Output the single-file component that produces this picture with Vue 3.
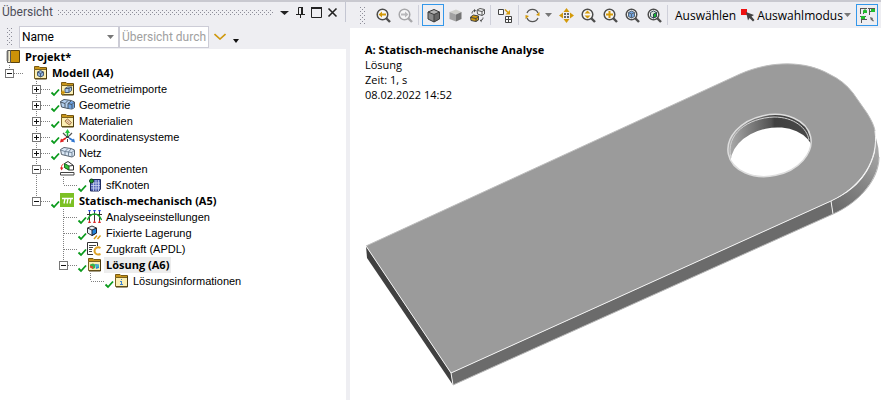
<template>
  <!-- Icônes partagées par l'arbre et la barre d'outils -->
  <svg class="sprite" aria-hidden="true">
    <defs>
      <pattern id="dots" width="4" height="4" patternUnits="userSpaceOnUse">
        <rect width="1" height="1" fill="#8d8d99" />
        <rect x="2" y="2" width="1" height="1" fill="#8d8d99" />
      </pattern>

      <symbol id="i-folder" viewBox="0 0 15 15">
        <path d="M1.500 4.500V1.500H6L7 2.500H13.500V4.500Z" fill="#c8951a" stroke="#7a5b14" />
        <path d="M1.500 4.500H13.500V13.500H1.500Z" fill="#fbefb4" stroke="#7a6220" />
        <path d="M13.500 3V14H2" fill="none" stroke="#4d3c10" />
      </symbol>

      <symbol id="i-project" viewBox="0 0 15 15">
        <path d="M4.500 1.500H13.500V13.500H4.500Z" fill="#cc9208" stroke="#5a430d" />
        <path d="M1.500 1.500H4.500V13.500H1.500Z" fill="#f4eecf" stroke="#555" />
        <path d="M0 3h3M0 5h3M0 7h3M0 9h3M0 11h3" stroke="#888" />
      </symbol>
      <symbol id="i-model" viewBox="0 0 15 15">
        <use href="#i-folder" />
        <path d="M7.500 5.500L10.500 7V10.500L7.500 12L4.500 10.500V7Z" fill="#8fb4e0" stroke="#4a5b70" />
        <path d="M4.500 7L7.500 8.500L10.500 7M7.500 8.500V12" fill="none" stroke="#4a5b70" />
      </symbol>
      <symbol id="i-import" viewBox="0 0 15 15">
        <use href="#i-folder" />
        <path d="M5 7.500L7.500 6H11.500V9.500L9 11.500H5Z" fill="#a5c8ee" stroke="#4a5b70" />
        <path d="M5 7.500H9L11.500 6M9 7.500V11" fill="none" stroke="#4a5b70" />
        <path d="M1 11.500H5M3 9.500V13.500" stroke="#cc9208" stroke-width="1.500" />
      </symbol>
      <symbol id="i-geometry" viewBox="0 0 15 15">
        <path d="M.5 4.500L4 2.500L8 3L11 3.500L14.500 5V10.500L12 12L8 11.500L1.500 10Z" fill="#b4d0f0" stroke="#4a5663" />
        <path d="M8 6.500L11 4L14 5.500V10.500L12 12L8 11Z" fill="#6ea3e2" />
        <path d="M.5 5L5 6.500V10.500M5 6.500L8 3.500M8 6.500L12 7.500V12M12 7.500L14.500 5M8 6.500V11.500M8 6.500L11 4" fill="none" stroke="#4a5663" />
      </symbol>
      <symbol id="i-material" viewBox="0 0 15 15">
        <use href="#i-folder" />
        <path d="M5 8L7.500 6L11.500 9.500L9.500 12L6 9.500Z" fill="#ecd0ae" stroke="#a67545" />
        <path d="M7 8L9.500 10.500" stroke="#c99e70" />
      </symbol>
      <symbol id="i-axes" viewBox="0 0 15 15">
        <path d="M3 4L6 7M12 4L9 7" stroke="#555" stroke-width="1.200" />
        <path d="M7.500 3V7" stroke="#19b333" stroke-width="1.600" />
        <path d="M7.500 0L10 4H5Z" fill="#22c43c" />
        <path d="M6 9L2 11.500" stroke="#e02020" stroke-width="1.600" />
        <path d="M0 13.500L1 9.500L4 12.500Z" fill="#e02020" />
        <path d="M9 9L13 11.500" stroke="#2d74cf" stroke-width="1.600" />
        <path d="M15 13.500L14 9.500L11 12.500Z" fill="#2d74cf" />
        <rect x="6" y="7" width="3" height="2" fill="#444" />
        <path d="M7.500 10V13" stroke="#444" />
      </symbol>
      <symbol id="i-mesh" viewBox="0 0 15 15">
        <path d="M.5 4.500L4 2.500L11 3.500L14.500 5V10.500L12 12L1.500 9.500Z" fill="#dbe8f6" stroke="#5a6570" />
        <path d="M.5 5L5 6.500L12 7.500V12M12 7.500L14.500 5M5 6.500V10.500M5 6.500L8 3.500M8.500 7V11M8.500 7L11 4" fill="none" stroke="#73869a" />
      </symbol>
      <symbol id="i-components" viewBox="0 0 15 15">
        <path d="M4.500 2.500L8 .5L13.500 4.500V9H9L4.500 6.500Z" fill="#fff" stroke="#333" />
        <path d="M4.500 2.500L9 5V9L4.500 6.500Z" fill="#35c43b" stroke="#1f6b23" />
        <path d="M9 5L13 4.500" stroke="#333" />
        <path d="M3.500 3C1.500 4 1.500 5 1.500 7" fill="none" stroke="#e02828" />
        <path d="M0 6.500H3.500L1.500 9.500Z" fill="#e02828" />
        <path d="M.5 11.500H14V14H.5Z" fill="#fff" stroke="#444" />
      </symbol>
      <symbol id="i-nodes" viewBox="0 0 15 15">
        <path d="M4 2.500H13.500V12L12 14H3.500V4Z" fill="#5567b8" stroke="#1e2a5e" />
        <path d="M6.500 3V14M9 3V14M11.500 3V14M4 6H13M4 8.500H13M4 11H13" stroke="#cdd5f3" stroke-width="0.800" />
        <circle cx="4.500" cy="4" r="2" fill="#1a9a2c" stroke="#0b3d14" />
      </symbol>
      <symbol id="i-static" viewBox="0 0 15 15">
        <rect width="14" height="14" fill="#7cc024" />
        <path d="M2 5.500H13M4 10.500L5 5.500M7 10.500L8 5.500M10 10.500L11 5.500" fill="none" stroke="#fff" stroke-width="1.300" />
      </symbol>
      <symbol id="i-settings" viewBox="0 0 15 15">
        <path d="M2.500 2V13M7.500 2V13M12.500 2V13M0 5.500H15" stroke="#333" />
        <path d="M.5 11C2 7 5 5 7.500 5S13 7 14.500 11" fill="none" stroke="#19a82c" stroke-width="1.400" />
        <path d="M1 1H4L2.500 3.500ZM6 1H9L7.500 3.500ZM11 1H14L12.500 3.500Z" fill="#2347d6" />
        <path d="M1 14H4L2.500 11ZM6 14H9L7.500 11ZM11 14H14L12.500 11Z" fill="#d82626" />
      </symbol>
      <symbol id="i-fixed" viewBox="0 0 15 15">
        <path d="M.5 3L5 1L9.500 3V8L5 10.500L.5 8Z" fill="#e7eff7" stroke="#333" />
        <path d="M5 5L9.500 3V8L5 10.500Z" fill="#2384d8" stroke="#223" />
        <path d="M.5 3L5 5" stroke="#333" />
        <path d="M7 14L10 10.500M10.500 14L13.500 10.500" stroke="#d69a16" stroke-width="1.400" />
      </symbol>
      <symbol id="i-apdl" viewBox="0 0 15 15">
        <path d="M6 13.500H.5V1.500H10.500V5" fill="#fff" stroke="#333" />
        <path d="M2 4.500H9M2 6.500H6M2 8.500H5M2 10.500H5" stroke="#444" />
        <path d="M13.500 7C10 5 7.500 7.500 7.500 10S10 14.500 13.500 13" fill="none" stroke="#dda226" stroke-width="2" />
      </symbol>
      <symbol id="i-solution" viewBox="0 0 15 15">
        <use href="#i-folder" />
        <path d="M3 7.500L6 6.500L8 7.500V11L6 12L3 10Z" fill="#36b34b" />
        <path d="M3 8.500L6 9.500V12L3 10.500Z" fill="#dc4b2d" />
        <path d="M8 7L12 7.500V11L9 12Z" fill="#328ad6" />
        <path d="M9 8L12 8V9.500L9 10Z" fill="#39bfc4" />
      </symbol>
      <symbol id="i-info" viewBox="0 0 15 15">
        <use href="#i-folder" />
        <path d="M7 6H8V7H7ZM6 8H8V11H9V12H6V11H7V9H6Z" fill="#3b82d0" />
      </symbol>

      <symbol id="i-lens" viewBox="0 0 15 15">
        <circle cx="6.500" cy="6.500" r="5.300" fill="#f7f7f8" stroke="currentColor" stroke-width="1.500" />
        <path d="M10 10L14 14" stroke="currentColor" stroke-width="2.400" />
      </symbol>
      <symbol id="t-prev" viewBox="0 0 15 15">
        <use href="#i-lens" />
        <path d="M2.500 6.500L6 3.500V5.500H10V7.500H6V9.500Z" fill="#d39a0b" />
      </symbol>
      <symbol id="t-next" viewBox="0 0 15 15">
        <use href="#i-lens" />
        <path d="M10.500 6.500L7 3.500V5.500H3V7.500H7V9.500Z" fill="#b9b9bc" />
      </symbol>
      <symbol id="t-cube" viewBox="0 0 15 15">
        <path d="M2 4L8 1.500L13.500 4V11L8 14L2 11Z" fill="#8a8a8a" />
        <path d="M8 6.500L13.500 4V11L8 14Z" fill="#666" />
        <path d="M2 4L8 6.500L13.500 4L8 1.500Z" fill="#b0b0b0" />
        <path d="M2 4L8 1.500L13.500 4V11L8 14L2 11ZM2 4L8 6.500L13.500 4M8 6.500V14" fill="none" stroke="#3c3c3c" />
      </symbol>
      <symbol id="t-shaded" viewBox="0 0 15 15">
        <path d="M1.500 4L8 1.500L13.500 4L8 6.500Z" fill="#cfcfcb" />
        <path d="M1.500 4L8 6.500V13.500L1.500 11Z" fill="#a2a2a2" />
        <path d="M8 6.500L13.500 4V11L8 13.500Z" fill="#747474" />
      </symbol>
      <symbol id="t-swap" viewBox="0 0 15 15">
        <path d="M7 2L10 .5L14.500 1.500V6L12 7.500L7.500 6Z" fill="#f2f2f2" stroke="#555" />
        <path d="M7.500 2.500L12 3.500V7.500M12 3.500L14.500 2" fill="none" stroke="#555" />
        <path d="M.5 9L3.500 7L8.500 8V12L6 13.500L1 12.500Z" fill="#d39a0b" stroke="#444" />
        <path d="M1 9.500L6 10.500V13.500M6 10.500L8.500 8.500" fill="none" stroke="#444" />
        <path d="M2 5.500C2 3.500 3 2.500 5 2.500M13 9.500C13 11.500 12 12.500 10.500 12.500" fill="none" stroke="#555" />
        <path d="M4 1L6 2.500L4 4.500ZM11.500 11L10 12.500L11.500 14.500Z" fill="#444" />
      </symbol>
      <symbol id="t-split" viewBox="0 0 15 15">
        <path d="M.5 1.500H5.500V6.500H.5Z" fill="#fafafa" stroke="#444" />
        <path d="M7.500 8.500H13.500V14.500H7.500ZM10.500 8.500V14.500M7.500 11.500H13.500" fill="#fafafa" stroke="#444" />
        <path d="M7 1.500L10 4.500" stroke="#d39a0b" stroke-width="1.500" />
        <path d="M12 6.500H7.500L12 2Z" fill="#d39a0b" />
      </symbol>
      <symbol id="t-rotate" viewBox="0 0 15 15">
        <path d="M2 5A6 6 0 0 1 13 5M13 10A6 6 0 0 1 2 10" fill="none" stroke="#555" stroke-width="1.300" />
        <path d="M14.500 4V8L11 7ZM.5 11V7L4 8Z" fill="#d39a0b" />
      </symbol>
      <symbol id="t-pan" viewBox="0 0 15 15">
        <path d="M7.500 0L10.500 4H4.500ZM7.500 15L10.500 11H4.500ZM0 7.500L4 4.500V10.500ZM15 7.500L11 4.500V10.500Z" fill="#d39a0b" />
        <path d="M5 5H7V7H5ZM8 5H10V7H8ZM5 8H7V10H5ZM8 8H10V10H8Z" fill="#666" />
      </symbol>
      <symbol id="t-zoom" viewBox="0 0 15 15">
        <use href="#i-lens" />
        <path d="M6.500 2.500L9.500 5.500H3.500ZM6.500 10.500L9.500 7.500H3.500Z" fill="#d39a0b" />
      </symbol>
      <symbol id="t-zoombox" viewBox="0 0 15 15">
        <use href="#i-lens" />
        <path d="M3 6.500H10M6.500 3V10" stroke="#d39a0b" stroke-width="2" />
      </symbol>
      <symbol id="t-fit" viewBox="0 0 15 15">
        <use href="#i-lens" />
        <path d="M3.500 4.500L6.500 3L9.500 4.500V8.500L6.500 10L3.500 8.500Z" fill="#75a5df" stroke="#567" />
        <path d="M3.500 4.500L6.500 6L9.500 4.500M6.500 6V10" fill="none" stroke="#567" />
      </symbol>
      <symbol id="t-fitsel" viewBox="0 0 15 15">
        <use href="#i-lens" />
        <path d="M3.500 4.500L6.500 3L9.500 4.500V8.500L6.500 10L3.500 8.500Z" fill="#d8e5d9" stroke="#456" />
        <path d="M6.500 6L9.500 4.500V8.500L6.500 10Z" fill="#18b52e" stroke="#345" />
      </symbol>
      <symbol id="t-pick" viewBox="0 0 15 15">
        <rect width="6" height="6" y="1" fill="#ee1111" />
        <path d="M5 4L13 7L10.500 8.500L13.500 12L12 13.500L8.500 10L7 12.500Z" fill="#444" />
      </symbol>
      <symbol id="t-tree" viewBox="0 0 15 15">
        <path d="M0 .5H7M.5 0V6M3 3H7M3.500 3V6M8 .5H15M9.500 0V7M9 3.500H13M0 8.500H6M1.500 8V15M1 11.500H7" fill="none" stroke="#555" />
        <path d="M3 3L5 1L7 3V5H3ZM11 1H15V4H11ZM1 8H5V11H1Z" fill="#20bd2d" />
        <path d="M10 9L13 10L12.500 11L14 13L13 13.500L11.500 12L11 12.500Z" fill="#666" />
      </symbol>
    </defs>
  </svg>

  <div class="app">
    <aside class="outline">
      <header class="outline-head">
        <h1>Übersicht</h1>
        <svg class="head-dots" aria-hidden="true"><rect width="100%" height="100%" fill="url(#dots)" /></svg>
        <button type="button" aria-label="Menü">
          <svg width="11" height="11" viewBox="0 0 11 11"><path d="M1 4H10L5.500 8Z" fill="#222" /></svg>
        </button>
        <button type="button" aria-label="Anheften">
          <svg width="11" height="11" viewBox="0 0 11 11"><path d="M3.500 7V.5H7.500V7M1 7.500H10M5.500 8V11" fill="none" stroke="#222" /><path d="M6 0H8V7H6Z" fill="#222" /></svg>
        </button>
        <button type="button" aria-label="Maximieren">
          <svg width="11" height="11" viewBox="0 0 11 11"><path d="M.5 1H10.500V10.500H.5Z" fill="none" stroke="#222" /><path d="M0 1H11" stroke="#222" stroke-width="2" /></svg>
        </button>
        <button type="button" aria-label="Schließen">
          <svg width="11" height="11" viewBox="0 0 11 11"><path d="M1.500 1.500L9.500 9.500M9.500 1.500L1.500 9.500" stroke="#222" stroke-width="1.600" /></svg>
        </button>
      </header>

      <div class="filter">
        <svg class="grip" aria-hidden="true"><rect width="100%" height="100%" fill="url(#dots)" /></svg>
        <div class="filter-field">
          <select v-model="filterBy" aria-label="Filter">
            <option>Name</option>
          </select>
          <svg class="field-caret" width="7" height="4" viewBox="0 0 7 4"><path d="M0 0H7L3.500 4Z" fill="#777" /></svg>
        </div>
        <input v-model="search" type="text" placeholder="Übersicht durch" aria-label="Übersicht durchsuchen" />
        <button type="button" class="expand" aria-label="Suchen">
          <svg width="12" height="7" viewBox="0 0 12 7"><path d="M.5 1L6 6L11.500 1" fill="none" stroke="#cf980c" stroke-width="1.600" /></svg>
        </button>
        <button type="button" class="more" aria-label="Optionen">
          <svg width="6" height="4" viewBox="0 0 6 4"><path d="M0 0H6L3 4Z" fill="#111" /></svg>
        </button>
      </div>

      <ul class="tree">
        <li v-for="node in nodes" :key="node.label" class="node">
          <svg v-for="(g, i) in node.guides" :key="i" class="guide" width="27" height="16" viewBox="0 0 27 16">
            <g fill="none" stroke="#808080" stroke-dasharray="1 1">
              <path v-if="g === '|' || g === '+'" d="M9.500 0V16" />
              <path v-if="g === 'L'" d="M9.500 0V8" />
              <path v-if="g === '+' || g === 'L'" d="M10 8.500H24" />
            </g>
            <template v-if="i === node.guides.length - 1">
              <g v-if="node.box">
                <rect x="5.500" y="4.500" width="8" height="8" fill="#fff" stroke="#777" />
                <path :d="node.box === 'plus' ? 'M7 8.500H12M9.500 6V11' : 'M7 8.500H12'" stroke="#111" />
              </g>
              <path v-if="node.done" d="M24.500 11.500L27 14L32 8.500" fill="none" stroke="#0a9a1c" stroke-width="1.800" />
            </template>
          </svg>
          <svg class="node-icon" width="15" height="15"><use :href="'#i-' + node.icon" /></svg>
          <span class="node-label" :class="{ bold: node.bold, selected: node.selected }">{{ node.label }}</span>
        </li>
      </ul>
    </aside>

    <main class="graphics">
      <div class="toolbar" role="toolbar">
        <svg class="grip" aria-hidden="true"><rect width="100%" height="100%" fill="url(#dots)" /></svg>
        <template v-for="(tool, i) in tools" :key="i">
          <span v-if="tool.id === 'sep'" class="sep" />
          <button v-else type="button" class="tool" :class="{ active: tool.active, muted: tool.muted, menu: tool.menu }" :aria-label="tool.title">
            <svg width="15" height="15"><use :href="'#t-' + tool.id" /></svg>
            <svg v-if="tool.menu" class="caret" width="7" height="4" viewBox="0 0 7 4"><path d="M0 0H7L3.500 4Z" fill="#777" /></svg>
          </button>
        </template>
        <span class="tool-text">Auswählen</span>
        <button type="button" class="mode">
          <svg width="15" height="15"><use href="#t-pick" /></svg>
          <span>Auswahlmodus</span>
          <svg width="7" height="4" viewBox="0 0 7 4"><path d="M0 0H7L3.500 4Z" fill="#777" /></svg>
        </button>
        <button type="button" class="tool active last" aria-label="Im Baum suchen">
          <svg width="15" height="15"><use href="#t-tree" /></svg>
        </button>
      </div>

      <section class="view">
        <div class="caption">
          <strong>A: Statisch-mechanische Analyse</strong>
          <span>Lösung</span>
          <span>Zeit: 1, s</span>
          <span>08.02.2022 14:52</span>
        </div>
        <!-- Lasche avec perçage -->
        <svg class="part" viewBox="350 28 531 372" role="img" aria-label="Lasche">
          <defs>
            <linearGradient id="round" x1="831" y1="205" x2="879" y2="150" gradientUnits="userSpaceOnUse">
              <stop offset="0" stop-color="#6c6c6c" />
              <stop offset="0.500" stop-color="#858585" />
              <stop offset="1" stop-color="#a8a8a8" />
            </linearGradient>
            <linearGradient id="bore" x1="727" y1="0" x2="812" y2="0" gradientUnits="userSpaceOnUse">
              <stop offset="0" stop-color="#b0b0b0" />
              <stop offset="0.200" stop-color="#8c8c8c" />
              <stop offset="0.520" stop-color="#525252" />
              <stop offset="0.560" stop-color="#404040" />
              <stop offset="1" stop-color="#484848" />
            </linearGradient>
            <clipPath id="hole">
              <ellipse cx="769.500" cy="145.500" rx="42" ry="30.500" transform="rotate(-12 769.500 145.500)" />
            </clipPath>
          </defs>
          <path d="M366 246L451 373L453 385L367 258Z" fill="#404040" />
          <path d="M451 373L831 201L833 214L453 385Z" fill="#6b6b6b" />
          <path d="M831 201C848 194 868 180 875 152L876 138Q879 148 879 157C878 182 856 204 833 214Z" fill="url(#round)" />
          <path d="M366 246L740 74C772 60 806 61 829 74Q844 81 853 93L867 113Q874 124 875 131C879 160 861 187 831 201L451 373Z" fill="#9b9b9b" />
          <path d="M366 246L740 74C772 60 806 61 829 74Q844 81 853 93L867 113Q874 124 875 131" fill="none" stroke="#bdbdbd" />
          <path d="M366 246L451 373L831 201C861 187 879 160 875 131M451 373L453 385M831 201L833 214" fill="none" stroke="#f2f2f2" />
          <path d="M453 385L833 214C856 204 879 182 879 157" fill="none" stroke="#b5b5b5" />
          <g clip-path="url(#hole)">
            <rect x="725" y="110" width="90" height="70" fill="url(#bore)" />
            <ellipse cx="772" cy="158.500" rx="42" ry="30.500" transform="rotate(-12 772 158.500)" fill="#fff" />
          </g>
          <ellipse cx="769.500" cy="145.500" rx="42" ry="30.500" transform="rotate(-12 769.500 145.500)" fill="none" stroke="#dedede" stroke-width="1.500" />
          <path d="M731 158C725 134 748 118 774 117C794 117 807 128 809 140" fill="none" stroke="#d2d2d2" />
        </svg>
      </section>
    </main>
  </div>
</template>

<script setup>
import { ref } from 'vue'

const filterBy = ref('Name')
const search = ref('')

// guides : une lettre par colonne d'indentation
// '|' = ligne verticale, '+' = branche, 'L' = dernière branche, ' ' = vide
const nodes = [
  { label: 'Projekt*', guides: '', icon: 'project', bold: true },
  { label: 'Modell (A4)', guides: 'L', icon: 'model', box: 'minus', bold: true },
  { label: 'Geometrieimporte', guides: ' +', icon: 'import', box: 'plus', done: true },
  { label: 'Geometrie', guides: ' +', icon: 'geometry', box: 'plus', done: true },
  { label: 'Materialien', guides: ' +', icon: 'material', box: 'plus', done: true },
  { label: 'Koordinatensysteme', guides: ' +', icon: 'axes', box: 'plus', done: true },
  { label: 'Netz', guides: ' +', icon: 'mesh', box: 'plus', done: true },
  { label: 'Komponenten', guides: ' +', icon: 'components', box: 'minus' },
  { label: 'sfKnoten', guides: ' |L', icon: 'nodes', done: true },
  { label: 'Statisch-mechanisch (A5)', guides: ' L', icon: 'static', box: 'minus', done: true, bold: true },
  { label: 'Analyseeinstellungen', guides: '  +', icon: 'settings', done: true },
  { label: 'Fixierte Lagerung', guides: '  +', icon: 'fixed', done: true },
  { label: 'Zugkraft (APDL)', guides: '  +', icon: 'apdl', done: true },
  { label: 'Lösung (A6)', guides: '  L', icon: 'solution', box: 'minus', done: true, bold: true, selected: true },
  { label: 'Lösungsinformationen', guides: '   L', icon: 'info', done: true },
].map((n) => ({ ...n, guides: n.guides.split('') }))

const tools = [
  { id: 'prev', title: 'Vorherige Ansicht' },
  { id: 'next', title: 'Nächste Ansicht', muted: true },
  { id: 'sep' },
  { id: 'cube', title: 'Schattiert mit Kanten', active: true },
  { id: 'shaded', title: 'Schattiert' },
  { id: 'swap', title: 'Anzeige wechseln' },
  { id: 'sep' },
  { id: 'split', title: 'Ansichtsfenster' },
  { id: 'sep' },
  { id: 'rotate', title: 'Drehen', menu: true },
  { id: 'pan', title: 'Verschieben' },
  { id: 'zoom', title: 'Zoom' },
  { id: 'zoombox', title: 'Zoomfenster' },
  { id: 'fit', title: 'Einpassen' },
  { id: 'fitsel', title: 'Auswahl einpassen' },
  { id: 'sep' },
]
</script>

<style>
body {
  margin: 0;
  background: #fff;
}
</style>

<style scoped>
.sprite {
  position: absolute;
  width: 0;
  height: 0;
}

.app {
  display: flex;
  box-sizing: border-box;
  min-height: 100vh;
  border-top: 2px solid #c9c9d0;
  background: #eeeef2;
  color: #000;
  font-family: "Open Sans", "Noto Sans", sans-serif;
  font-size: 12px;
}

button {
  display: flex;
  align-items: center;
  justify-content: center;
  padding: 0;
  border: 0;
  background: none;
  color: inherit;
  font: inherit;
}

.outline {
  display: flex;
  flex: 0 0 346px;
  flex-direction: column;
  min-width: 0;
  font-family: Roboto, "Noto Sans", sans-serif;
}

.outline-head {
  display: flex;
  align-items: center;
  gap: 5px;
  height: 20px;
  margin-bottom: 2px;
  padding: 0 7px 0 2px;
  border-right: 1px solid #c4c6d2;
}

.outline-head h1 {
  margin: 0;
  color: #4c4c58;
  font-size: 12px;
  font-weight: 400;
  line-height: 20px;
}

.head-dots {
  flex: 1 1 0;
  width: 0;
  height: 5px;
}

.filter {
  display: flex;
  align-items: center;
  height: 25px;
}

.grip {
  flex: none;
  width: 5px;
  height: 17px;
  margin: 0 7px;
}

.filter-field {
  position: relative;
  width: 100px;
}

.filter-field select,
.filter input {
  box-sizing: border-box;
  height: 22px;
  border: 1px solid #ccccd6;
  border-radius: 0;
  background: #fff;
  color: #000;
  font: inherit;
}

.filter-field select {
  width: 100%;
  padding: 0 2px;
  appearance: none;
}

.field-caret {
  position: absolute;
  top: 9px;
  right: 5px;
  pointer-events: none;
}

.filter input {
  width: 90px;
  padding: 0 2px;
}

.filter input::placeholder {
  color: #a0a0a0;
}

.expand {
  width: 22px;
  height: 22px;
}

.more {
  width: 10px;
  height: 22px;
  padding-top: 8px;
}

.tree {
  flex: 1;
  margin: 0;
  padding: 0;
  background: #fff;
  list-style: none;
}

.node {
  display: flex;
  height: 16px;
  font-family: "Liberation Sans", Arial, sans-serif;
  font-size: 11px;
  line-height: 16px;
  white-space: nowrap;
}

.guide {
  flex: none;
  overflow: visible;
}

.node-icon {
  flex: none;
  margin-left: 6px;
}

.node-label {
  margin-left: 2px;
  padding: 0 2px;
}

.node-label.bold {
  font-family: "Open Sans", "Noto Sans", sans-serif;
  font-weight: 700;
}

.selected {
  background: #ededed;
}

.graphics {
  display: flex;
  flex: 1;
  flex-direction: column;
  min-width: 0;
  margin-left: 4px;
}

.toolbar {
  display: flex;
  align-items: center;
  height: 26px;
  padding: 0 3px;
}

.tool {
  flex: none;
  box-sizing: border-box;
  width: 22px;
  height: 22px;
  color: #4d4d4d;
}

.tool.active {
  border: 1px solid #3397ea;
}

.tool.muted {
  color: #a7a7aa;
}

.tool.menu {
  gap: 5px;
  width: 33px;
}

.sep {
  flex: none;
  width: 1px;
  height: 20px;
  margin: 0 3px 0 2px;
  background: #cfd0da;
}

.tool-text {
  padding: 0 5px 0 4px;
}

.mode {
  gap: 1px;
}

.last {
  margin-left: auto;
}

.view {
  position: relative;
  flex: 1;
  background: #fff;
}

.caption {
  position: absolute;
  top: 14px;
  left: 15px;
  display: flex;
  flex-direction: column;
  font-size: 11px;
  line-height: 15px;
}

.part {
  display: block;
  width: 100%;
}
</style>
